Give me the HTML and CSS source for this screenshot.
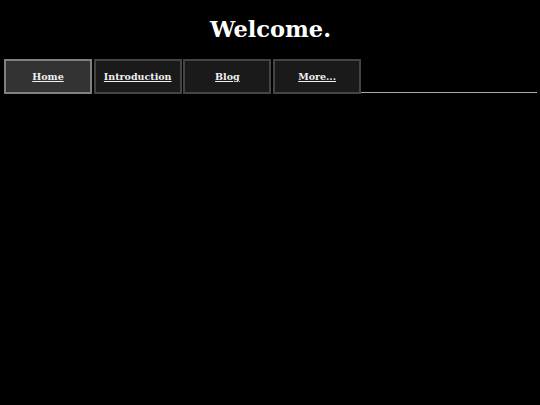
FILE: index.html
```html
<!DOCTYPE html>
<html>
<head>
<meta charset="utf-8">
<link rel="stylesheet" href="styles.css">
</head>
<body>
<h1 class="title">Welcome.</h1>
<nav class="tabs">
  <a class="tab active" href="#">Home</a>
  <a class="tab" href="#">Introduction</a>
  <a class="tab" href="#">Blog</a>
  <a class="tab" href="#">More...</a>
  <div class="rest"></div>
</nav>
</body>
</html>
```
FILE: styles.css
```css
html, body {
  margin: 0;
  padding: 0;
  background: #000;
  color: #fff;
  font-family: "DejaVu Serif", Georgia, serif;
}
body {
  padding: 0 3px 0 4px;
}
.title {
  margin: 0;
  padding-top: 15px;
  height: 59px;
  box-sizing: border-box;
  text-align: center;
  font-size: 22.5px;
  font-weight: bold;
  line-height: 28px;
}
.tabs {
  display: flex;
  align-items: flex-end;
  gap: 1.7px;
}
.tab {
  flex: 0 0 auto;
  width: 88px;
  height: 35px;
  box-sizing: border-box;
  border: 2px solid #444;
  background: #1a1a1a;
  color: #f0f0f0;
  font-size: 9.5px;
  font-weight: bold;
  display: flex;
  align-items: center;
  justify-content: center;
  text-decoration: underline;
  padding-bottom: 1px;
}
.tab.active {
  background: #333;
  border-color: #808080;
}
.rest {
  flex: 1 1 auto;
  margin-left: -1.7px;
  border-bottom: 1px solid #aaa;
  margin-bottom: 1px;
}
```
